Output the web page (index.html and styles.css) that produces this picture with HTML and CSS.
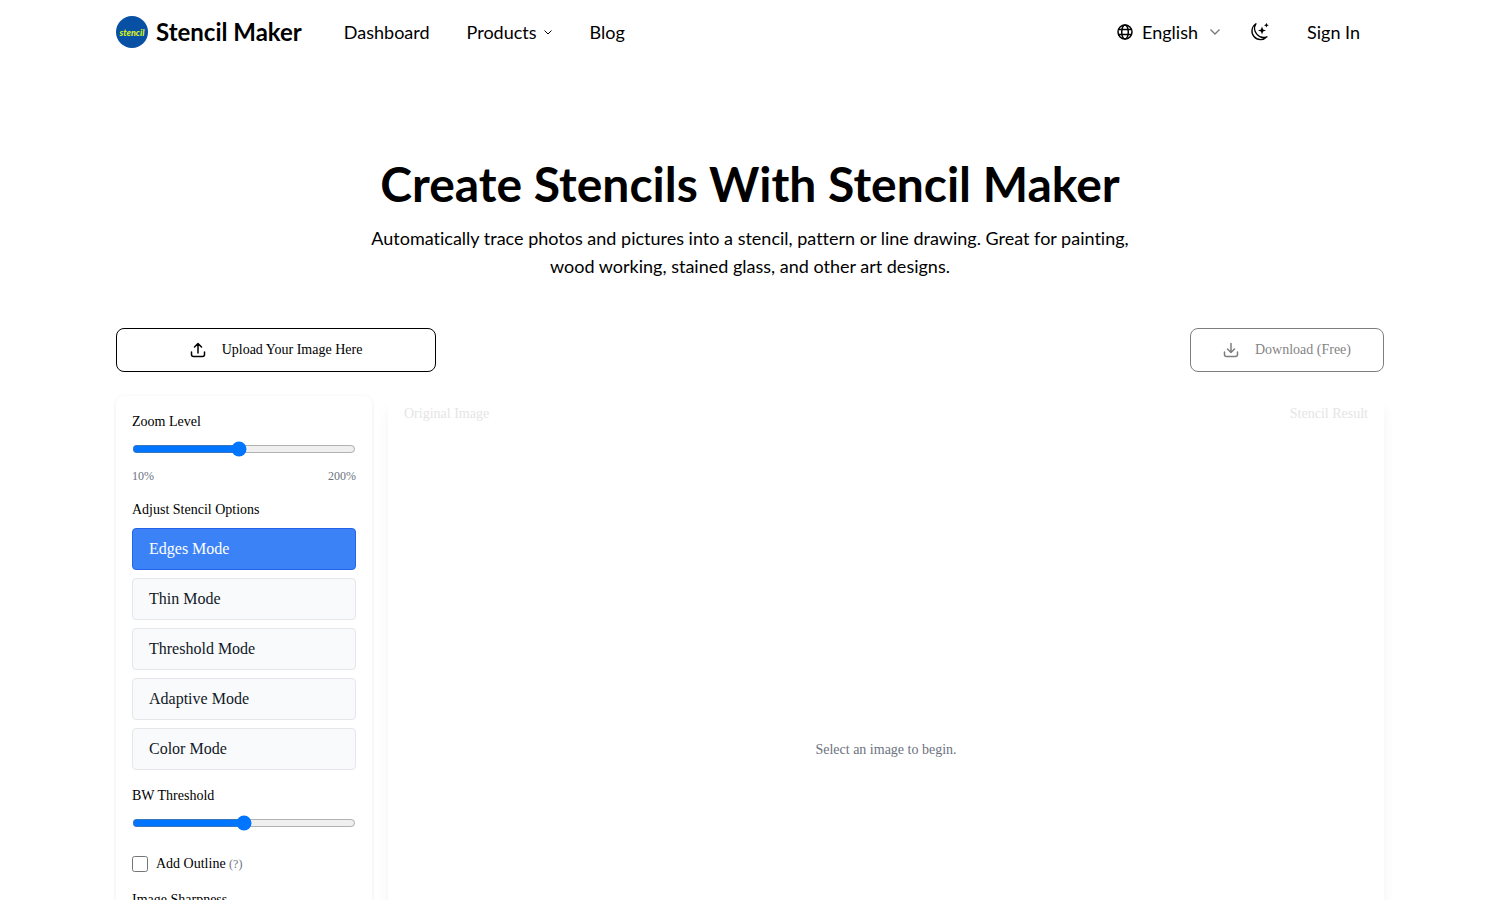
FILE: index.html
```html
<!DOCTYPE html>
<html lang="en">
	<head>
		<meta charset="utf-8">
		<meta name="viewport" content="width=device-width, initial-scale=1">
		<title>Stencil Maker</title>
		<link rel="stylesheet" href="styles.css">
	</head>
	<body>
		<header class="header container">
			<a class="brand" href="#">
				<svg class="logo" viewBox="0 0 32 32" aria-hidden="true">
					<circle cx="16" cy="16" r="16" fill="#0750a4"/>
					<text x="16" y="20" text-anchor="middle">stencil</text>
				</svg>
				<span>Stencil Maker</span>
			</a>
			<nav class="nav">
				<a href="#">Dashboard</a>
				<a href="#">Products
					<svg class="chevron-small" viewBox="0 0 10 10"><path d="M1.500 3.500 5 7l3.500-3.500"/></svg>
				</a>
				<a href="#">Blog</a>
			</nav>
			<div class="actions">
				<div class="language">
					<svg class="globe" viewBox="0 0 16 16">
						<circle cx="8" cy="8" r="7"/>
						<ellipse cx="8" cy="8" rx="3.300" ry="7"/>
						<path d="M1.500 5.600h13M1.500 10.400h13"/>
					</svg>
					<select aria-label="Language">
						<option>English</option>
					</select>
					<svg class="chevron" viewBox="0 0 12 12"><path d="M1.500 3.500 6 8l4.500-4.500"/></svg>
				</div>
				<button class="theme" aria-label="Dark mode">
					<svg viewBox="0 0 20 20">
						<path class="moon" d="M7 1.700A8.600 8.600 0 1 0 17.900 14.800 9 9 0 0 1 7 1.700z"/>
						<path d="M13 4.500l1.100 2.900 2.900 1.100-2.900 1.100L13 12.500l-1.100-2.900L9 8.500l2.900-1.100zM17.400.800l.7 1.700 1.700.7-1.700.7-.7 1.700-.7-1.700-1.700-.7 1.700-.7z"/>
					</svg>
				</button>
				<a class="sign-in" href="#">Sign In</a>
			</div>
		</header>

		<main class="container">
			<section class="intro">
				<h1>Create Stencils With Stencil Maker</h1>
				<p>Automatically trace photos and pictures into a stencil, pattern or line drawing. Great for painting, wood working, stained glass, and other art designs.</p>
			</section>

			<div class="toolbar">
				<button class="file-btn upload">
					<svg viewBox="0 0 16 16"><path d="M8 11V2M4.500 5 8 1.500 11.500 5M1.500 10v2.500a2 2 0 0 0 2 2h9a2 2 0 0 0 2-2V10"/></svg>
					Upload Your Image Here
				</button>
				<button class="file-btn download" disabled>
					<svg viewBox="0 0 16 16"><path d="M8 1.500V10M4.500 7 8 10.500 11.500 7M1.500 10v2.500a2 2 0 0 0 2 2h9a2 2 0 0 0 2-2V10"/></svg>
					Download (Free)
				</button>
			</div>

			<div class="editor">
				<aside class="panel options">
					<div class="field">
						<label for="zoom">Zoom Level</label>
						<input type="range" id="zoom" min="10" max="200" value="100">
						<div class="scale"><span>10%</span><span>200%</span></div>
					</div>
					<div class="field">
						<h2>Adjust Stencil Options</h2>
						<div class="modes">
							<button class="mode current">Edges Mode</button>
							<button class="mode">Thin Mode</button>
							<button class="mode">Threshold Mode</button>
							<button class="mode">Adaptive Mode</button>
							<button class="mode">Color Mode</button>
						</div>
					</div>
					<div class="field">
						<label for="threshold">BW Threshold</label>
						<input type="range" id="threshold" min="0" max="100" value="50">
					</div>
					<div class="field check">
						<input type="checkbox" id="outline">
						<label for="outline">Add Outline <small>(?)</small></label>
					</div>
					<div class="field">
						<label for="sharpness">Image Sharpness</label>
						<input type="range" id="sharpness" min="0" max="100" value="50">
					</div>
				</aside>
				<section class="panel preview">
					<div class="captions"><span>Original Image</span><span>Stencil Result</span></div>
					<p>Select an image to begin.</p>
				</section>
			</div>
		</main>
	</body>
</html>
```
FILE: styles.css
```css
* {
  box-sizing: border-box;
  margin: 0;
  padding: 0;
}

body {
  background: #fff;
  color: #000;
  font-family: "Liberation Serif", serif;
  font-size: 14px;
  line-height: 20px;
}

a {
  color: inherit;
  text-decoration: none;
}

button, select {
  border: 0;
  background: none;
  color: inherit;
  font: inherit;
  cursor: pointer;
}

svg {
  flex: none;
  fill: none;
  stroke: currentColor;
}

.container {
  max-width: 1300px;
  margin: 0 auto;
  padding: 0 16px;
}

/* header */
.header {
  display: flex;
  align-items: center;
  height: 64px;
  font-family: Lato, sans-serif;
  font-size: 18px;
  line-height: 28px;
}

.brand {
  display: flex;
  align-items: center;
  gap: 8px;
  margin-right: 42px;
  font-size: 24px;
  font-weight: 700;
  line-height: 32px;
}

.logo {
  width: 32px;
  height: 32px;
  stroke: none;
}

.logo text {
  fill: #d5f01e;
  font-family: Lato, sans-serif;
  font-size: 9px;
  font-style: italic;
  font-weight: 900;
}

.nav {
  display: flex;
  gap: 37px;
}

.nav a {
  display: flex;
  align-items: center;
  gap: 6px;
}

.chevron-small {
  width: 10px;
  height: 10px;
}

.actions {
  display: flex;
  align-items: center;
  margin-left: auto;
  padding-right: 24px;
}

.language {
  display: flex;
  align-items: center;
}

.language select {
  appearance: none;
  margin: 0 11px 0 9px;
}

.globe {
  width: 16px;
  height: 16px;
  stroke-width: 1.5;
}

.chevron {
  width: 12px;
  height: 12px;
  color: #777;
  stroke-width: 1.3;
}

.theme {
  display: flex;
  margin: 0 38px 0 28px;
}

.theme svg {
  width: 20px;
  height: 20px;
  fill: currentColor;
  stroke: none;
}

.theme .moon {
  fill: none;
  stroke: currentColor;
  stroke-width: 1.3;
  stroke-linejoin: round;
}

/* intro */
.intro {
  max-width: 768px;
  margin: 0 auto;
  padding: 96px 0 48px;
  font-family: Lato, sans-serif;
  font-variant-ligatures: none;
  text-align: center;
}

.intro h1 {
  margin-bottom: 16px;
  font-size: 48px;
  font-weight: 700;
  line-height: 48px;
}

.intro p {
  font-size: 18px;
  line-height: 28px;
}

/* upload / download */
.toolbar {
  display: flex;
  justify-content: space-between;
  margin-bottom: 24px;
}

.file-btn {
  display: flex;
  align-items: center;
  justify-content: center;
  gap: 16px;
  padding: 11px 32px;
  border: 1px solid #000;
  border-radius: 8px;
}

.file-btn svg {
  width: 16px;
  height: 16px;
  stroke-width: 1.5;
  stroke-linecap: round;
  stroke-linejoin: round;
}

.upload {
  width: 320px;
}

.download:disabled {
  opacity: 0.5;
  cursor: default;
}

/* editor */
.editor {
  display: grid;
  grid-template-columns: 256px 1fr;
  gap: 16px;
}

.panel {
  padding: 16px;
  border-radius: 8px;
}

.options {
  box-shadow: 0 1px 4px rgba(0, 0, 0, 0.08);
}

.preview {
  display: flex;
  flex-direction: column;
  min-height: 696px;
  padding-top: 8px;
  box-shadow: 0 10px 15px -3px rgba(0, 0, 0, 0.08);
}

.captions {
  display: flex;
  justify-content: space-between;
  color: #e5e5e5;
}

.preview p {
  margin: auto;
  color: #6b7280;
}

.field {
  display: flow-root;
  margin-bottom: 16px;
}

.field label, .field h2 {
  display: block;
  margin-bottom: 8px;
  font-size: 14px;
  font-weight: 400;
}

.field input[type="range"] {
  display: block;
  width: 100%;
  height: 18px;
  margin-bottom: 6px;
}

.scale {
  display: flex;
  justify-content: space-between;
  padding-top: 4px;
  color: #6b7280;
  font-size: 12px;
  line-height: 16px;
}

.modes {
  display: grid;
  gap: 8px;
}

.mode {
  padding: 8px 16px;
  border: 1px solid #e5e7eb;
  border-radius: 4px;
  background: #f9fafb;
  color: #111827;
  font-size: 16px;
  line-height: 24px;
  text-align: left;
}

.mode.current {
  border-color: #2563eb;
  background: #3b82f6;
  color: #fff;
}

.field.check {
  display: flex;
  align-items: center;
  gap: 8px;
}

.check input {
  width: 16px;
  height: 16px;
}

.field.check label {
  margin: 0;
}

.check small {
  color: #6b7280;
  font-size: 12px;
}
```
